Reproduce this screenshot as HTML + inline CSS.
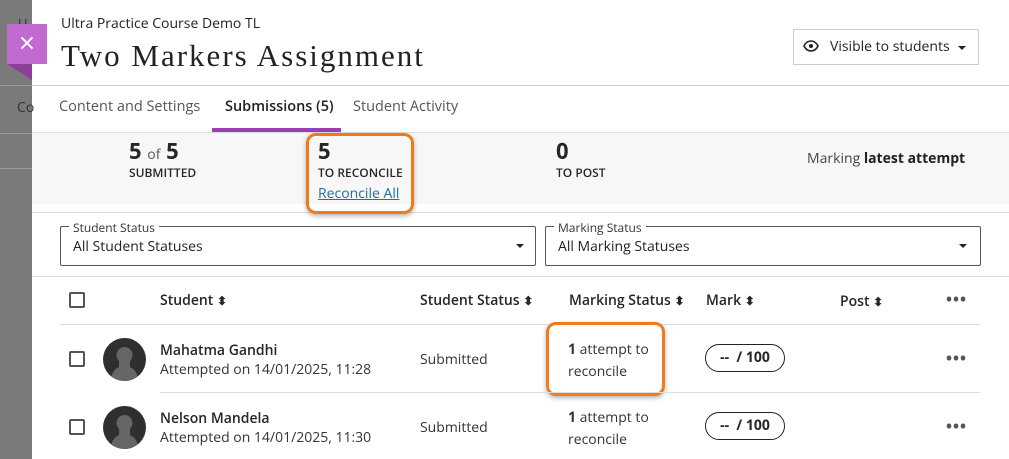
<!DOCTYPE html>
<html><head><meta charset="utf-8"><style>
*{box-sizing:border-box;margin:0;padding:0}
body{width:1009px;height:459px;overflow:hidden;font-family:"Open Sans","Liberation Sans",sans-serif;background:#fff;position:relative;color:#262626}
.a{position:absolute;white-space:nowrap}
.gray{left:0;top:0;width:32px;height:459px;background:#7a7a7a}
.sort{font-size:12px}
.cb{width:16px;height:16px;border:2px solid #555;border-radius:2px;background:#fff}
.av{width:43px;height:43px;border-radius:50%;background:#2f2f2f;overflow:hidden}
.pill{width:80px;height:28px;border:1px solid #222;border-radius:14px;font-size:14px;font-weight:bold;text-align:center;line-height:26px}
.dots{font-size:16px;letter-spacing:1px;font-weight:bold;color:#555}
.orange{border:3px solid #f07b1a;border-radius:10px;box-shadow:0 2px 5px rgba(0,0,0,.3)}
</style></head><body>
<div class="a gray"></div>
<div class="a" style="left:0;top:85px;width:32px;height:1px;background:#999"></div>
<div class="a" style="left:0;top:133px;width:32px;height:1px;background:#999"></div>
<div class="a" style="left:0;top:168px;width:32px;height:1px;background:#999"></div>
<div class="a" style="left:18px;top:14px;color:#333;font-size:13px">U</div>
<div class="a" style="left:17px;top:98px;color:#333;font-size:14px">Co</div>
<div class="a" style="left:7px;top:24px;width:40px;height:40px;background:#c16bd0;color:#fff;font-size:28px;text-align:center;line-height:38px">×</div>
<div class="a" style="left:7px;top:64px;width:0;height:0;border-top:16px solid #8b3f99;border-left:25px solid transparent"></div>

<div class="a" style="left:61px;top:14px;font-size:14px;color:#222">Ultra Practice Course Demo TL</div>
<div class="a" style="left:61px;top:38px;font-size:31px;letter-spacing:2px;font-family:'Liberation Serif',serif;color:#222">Two Markers Assignment</div>
<div class="a" style="left:793px;top:29px;width:186px;height:36px;border:1px solid #ccc;font-size:14px;line-height:34px;padding-left:36px;color:#222">Visible to students</div>
<svg class="a" style="left:803px;top:39px" width="16" height="14" viewBox="0 0 16 14"><path d="M1 7C3 3 5.5 2 8 2s5 1 7 5c-2 4-4.5 5-7 5S3 11 1 7z" fill="none" stroke="#222" stroke-width="1.6"/><circle cx="8" cy="7" r="2" fill="#222"/></svg>
<div class="a" style="left:958px;top:46px;border-top:4px solid #222;border-left:4px solid transparent;border-right:4px solid transparent"></div>
<div class="a" style="left:32px;top:85px;width:977px;height:1px;background:#ccc"></div>

<div class="a" style="left:59px;top:97px;font-size:14.5px;color:#555">Content and Settings</div>
<div class="a" style="left:225px;top:97px;font-size:14.5px;color:#222;font-weight:600">Submissions (5)</div>
<div class="a" style="left:353px;top:97px;font-size:14.5px;color:#555">Student Activity</div>
<div class="a" style="left:212px;top:128px;width:129px;height:4px;background:#9b3fb4"></div>
<div class="a" style="left:32px;top:132px;width:977px;height:72px;background:#f7f7f7;border-top:1px solid #ddd"></div>
<div class="a" style="left:32px;top:212px;width:977px;height:1px;background:#ddd"></div>

<div class="a" style="left:129px;top:136px;font-size:22px;font-weight:bold">5 <span style="font-size:14px;font-weight:normal;color:#555">of</span> 5</div>
<div class="a" style="left:129px;top:164px;font-size:12px;font-weight:600">SUBMITTED</div>
<div class="a orange" style="left:306px;top:133px;width:108px;height:81px"></div>
<div class="a" style="left:318px;top:136px;font-size:22px;font-weight:bold">5</div>
<div class="a" style="left:318px;top:164px;font-size:12px;font-weight:600">TO RECONCILE</div>
<div class="a" style="left:318px;top:184px;font-size:14px;color:#1f6fa8;text-decoration:underline">Reconcile All</div>
<div class="a" style="left:556px;top:136px;font-size:22px;font-weight:bold">0</div>
<div class="a" style="left:556px;top:164px;font-size:12px;font-weight:600">TO POST</div>
<div class="a" style="left:807px;top:149px;font-size:14px;color:#444">Marking <b style="color:#222">latest attempt</b></div>

<div class="a" style="left:60px;top:226px;width:476px;height:40px;border:1px solid #555;border-radius:2px"></div>
<div class="a" style="left:69px;top:219px;font-size:12px;background:#fff;padding:0 4px;color:#333">Student Status</div>
<div class="a" style="left:73px;top:237px;font-size:14px;color:#222">All Student Statuses</div>
<div class="a" style="left:516px;top:244px;border-top:4px solid #222;border-left:4px solid transparent;border-right:4px solid transparent"></div>
<div class="a" style="left:545px;top:226px;width:436px;height:40px;border:1px solid #555;border-radius:2px"></div>
<div class="a" style="left:554px;top:219px;font-size:12px;background:#fff;padding:0 4px;color:#333">Marking Status</div>
<div class="a" style="left:558px;top:237px;font-size:14px;color:#222">All Marking Statuses</div>
<div class="a" style="left:959px;top:244px;border-top:4px solid #222;border-left:4px solid transparent;border-right:4px solid transparent"></div>
<div class="a" style="left:32px;top:276px;width:977px;height:1px;background:#ddd"></div>

<div class="a cb" style="left:69px;top:292px"></div>
<div class="a" style="left:160px;top:291px;font-size:14px;font-weight:600">Student <span class="sort">⬍</span></div>
<div class="a" style="left:420px;top:291px;font-size:14px;font-weight:600">Student Status <span class="sort">⬍</span></div>
<div class="a" style="left:569px;top:291px;font-size:14px;font-weight:600">Marking Status <span class="sort">⬍</span></div>
<div class="a" style="left:706px;top:291px;font-size:14px;font-weight:600">Mark <span class="sort">⬍</span></div>
<div class="a" style="left:840px;top:292px;font-size:14px;font-weight:600">Post <span class="sort">⬍</span></div>
<div class="a dots" style="left:946px;top:288px">•••</div>
<div class="a" style="left:60px;top:324px;width:920px;height:1px;background:#ddd"></div>

<div class="a cb" style="left:69px;top:351px"></div>
<div class="a av" style="left:103px;top:338px"><svg width="43" height="43"><circle cx="21.5" cy="17" r="8" fill="#666"/><path d="M8 43c0-10 6-15 13.5-15S35 33 35 43z" fill="#666"/><rect x="16" y="20" width="11" height="11" fill="#666"/></svg></div>
<div class="a" style="left:160px;top:341px;font-size:14px;font-weight:600">Mahatma Gandhi</div>
<div class="a" style="left:160px;top:360px;font-size:14px;color:#333">Attempted on 14/01/2025, 11:28</div>
<div class="a" style="left:420px;top:350px;font-size:14px;color:#333">Submitted</div>
<div class="a orange" style="left:546px;top:322px;width:119px;height:74px"></div>
<div class="a" style="left:568px;top:339px;font-size:14px;line-height:22px;color:#333"><b>1</b> attempt to<br>reconcile</div>
<div class="a pill" style="left:705px;top:344px">-- &nbsp;/ 100</div>
<div class="a dots" style="left:946px;top:347px">•••</div>
<div class="a" style="left:160px;top:392px;width:820px;height:1px;background:#ddd"></div>

<div class="a cb" style="left:69px;top:419px"></div>
<div class="a av" style="left:103px;top:406px"><svg width="43" height="43"><circle cx="21.5" cy="17" r="8" fill="#666"/><path d="M8 43c0-10 6-15 13.5-15S35 33 35 43z" fill="#666"/><rect x="16" y="20" width="11" height="11" fill="#666"/></svg></div>
<div class="a" style="left:160px;top:409px;font-size:14px;font-weight:600">Nelson Mandela</div>
<div class="a" style="left:160px;top:428px;font-size:14px;color:#333">Attempted on 14/01/2025, 11:30</div>
<div class="a" style="left:420px;top:418px;font-size:14px;color:#333">Submitted</div>
<div class="a" style="left:568px;top:407px;font-size:14px;line-height:22px;color:#333"><b>1</b> attempt to<br>reconcile</div>
<div class="a pill" style="left:705px;top:412px">-- &nbsp;/ 100</div>
<div class="a dots" style="left:946px;top:415px">•••</div>
</body></html>
